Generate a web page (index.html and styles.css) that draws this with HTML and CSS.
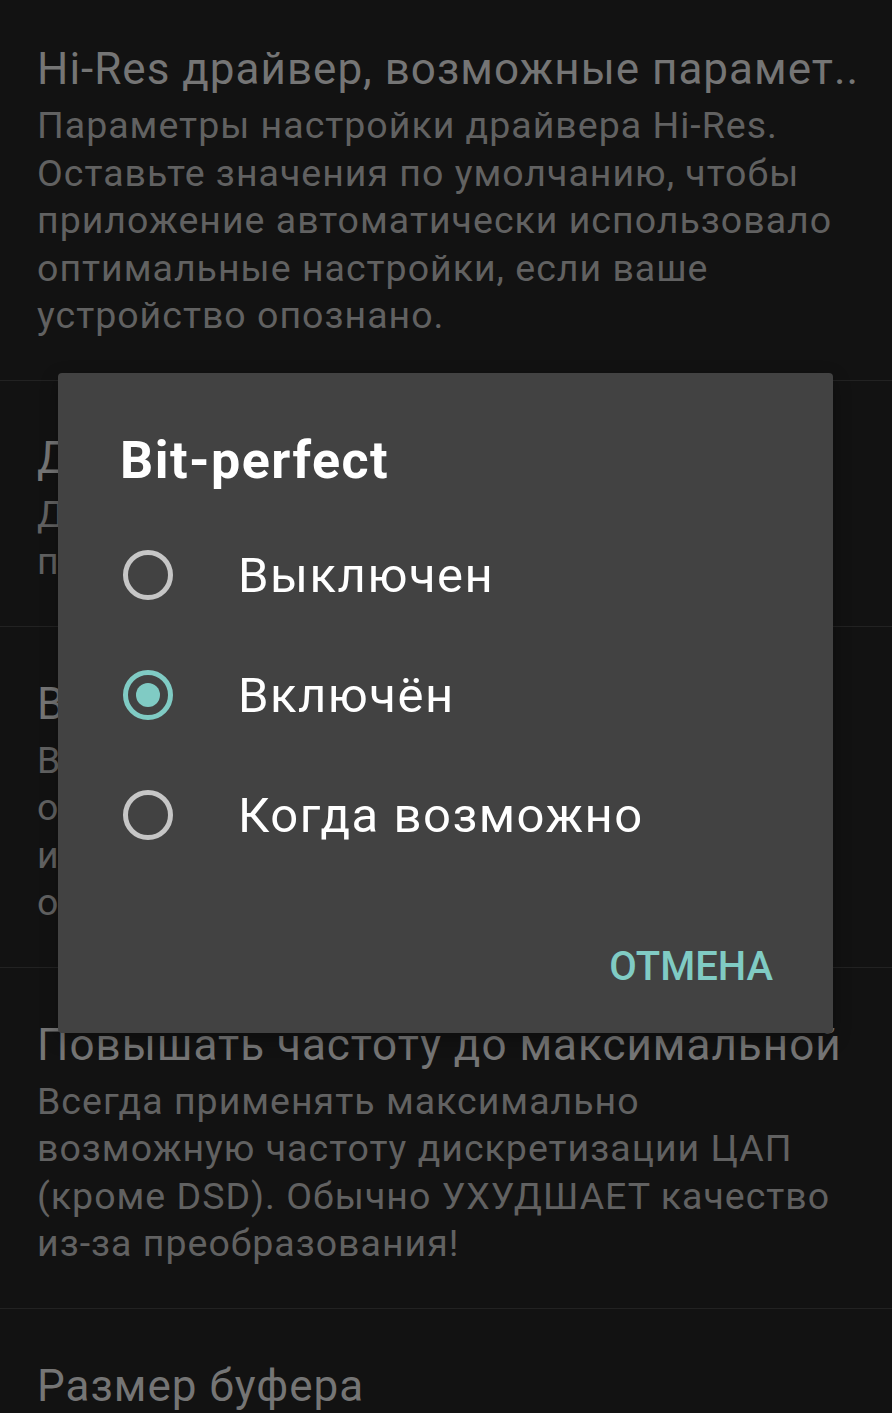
FILE: index.html
```html
<!DOCTYPE html>
<html lang="ru">
<head>
	<meta charset="utf-8">
	<meta name="viewport" content="initial-scale=1.0">
	<title>Bit-perfect</title>
	<link rel="stylesheet" href="styles.css">
</head>
<body>

	<main class="settings">
		<section class="pref pref-first">
			<div class="pref-title">Hi-Res драйвер, возможные парамет..</div>
			<div class="pref-summary">Параметры настройки драйвера Hi-Res. Оставьте значения по умолчанию, чтобы приложение автоматически использовало оптимальные настройки, если ваше устройство опознано.</div>
		</section>

		<section class="pref">
			<div class="pref-title">Драйвер вывода</div>
			<div class="pref-summary">Драйвер, используемый для вывода звука<br>подключенные ЦАП и Hi-Res устройства.</div>
		</section>

		<section class="pref">
			<div class="pref-title">Bit-perfect</div>
			<div class="pref-summary">Воспроизводить без изменения потока,<br>отключая эквалайзер, темп и эффекты<br>и регулировку громкости приложения<br>операционной системы.</div>
		</section>

		<section class="pref">
			<div class="pref-title">Повышать частоту до максимальной</div>
			<div class="pref-summary">Всегда применять максимально возможную частоту дискретизации ЦАП (кроме DSD). Обычно УХУДШАЕТ качество из-за преобразования!</div>
		</section>

		<section class="pref">
			<div class="pref-title">Размер буфера</div>
			<div class="pref-summary">Размер буфера вывода звука.</div>
		</section>
	</main>

	<div class="dialog">
		<h2 class="dialog-title">Bit-perfect</h2>

		<div class="choices">
			<label class="choice">
				<input type="radio" name="bitperfect" value="off">
				<span class="radio"></span>
				<span class="choice-text">Выключен</span>
			</label>
			<label class="choice">
				<input type="radio" name="bitperfect" value="on" checked>
				<span class="radio"></span>
				<span class="choice-text">Включён</span>
			</label>
			<label class="choice">
				<input type="radio" name="bitperfect" value="auto">
				<span class="radio"></span>
				<span class="choice-text">Когда возможно</span>
			</label>
		</div>

		<div class="dialog-actions">
			<button class="dialog-button" type="button">Отмена</button>
		</div>
	</div>

</body>
</html>
```

FILE: styles.css
```css
body, html {
	margin: 0;
	padding: 0;
	height: 100%;
	overflow: hidden;
	background: #121212;
	font-family: Roboto, "Noto Sans", sans-serif;
	-webkit-font-smoothing: antialiased;
}

* {
	box-sizing: border-box;
}

.settings {
	display: flex;
	flex-direction: column;
}

.pref {
	padding: 51px 38px 40px 37px;
	border-top: 1px solid #222222;
}

.pref-first {
	padding-top: 43px;
	border-top: none;
}

.pref-title {
	font-size: 44px;
	line-height: 52px;
	letter-spacing: 1px;
	color: #757575;
	white-space: nowrap;
	margin-bottom: 7px;
}

.pref-summary {
	font-size: 37.5px;
	line-height: 47.5px;
	letter-spacing: 1px;
	color: #616161;
}

/* dialog over the dimmed list */

.dialog {
	position: absolute;
	top: 373px;
	left: 58px;
	width: 775px;
	height: 660px;
	background: #424242;
	border-radius: 4px;
	box-shadow: 0 6px 18px rgba(0,0,0,0.3);
	padding: 58px 60px 31px 62px;
	display: flex;
	flex-direction: column;
}

.dialog-title {
	margin: 0 0 24px 0;
	font-size: 52px;
	line-height: 60px;
	font-weight: 700;
	letter-spacing: 1.5px;
	color: #ffffff;
}

.choices {
	display: flex;
	flex-direction: column;
}

.choice {
	height: 120px;
	display: flex;
	align-items: center;
	cursor: pointer;
}

.choice input {
	display: none;
}

.radio {
	width: 50px;
	height: 50px;
	margin-left: 3px;
	border: 5px solid #c6c6c6;
	border-radius: 50%;
	display: flex;
	align-items: center;
	justify-content: center;
	flex-shrink: 0;
}

.choice input:checked + .radio {
	border-color: #80cbc4;
}

.choice input:checked + .radio::after {
	content: '';
	width: 24px;
	height: 24px;
	border-radius: 50%;
	background: #80cbc4;
}

.choice-text {
	margin-left: 65px;
	font-size: 49px;
	letter-spacing: 1.5px;
	color: #ffffff;
}

.dialog-actions {
	margin-top: auto;
	display: flex;
	justify-content: flex-end;
}

.dialog-button {
	height: 72px;
	padding: 0;
	border: none;
	background: none;
	font-family: Roboto, "Noto Sans", sans-serif;
	font-size: 40px;
	font-weight: 500;
	text-transform: uppercase;
	color: #80cbc4;
	cursor: pointer;
}
```
